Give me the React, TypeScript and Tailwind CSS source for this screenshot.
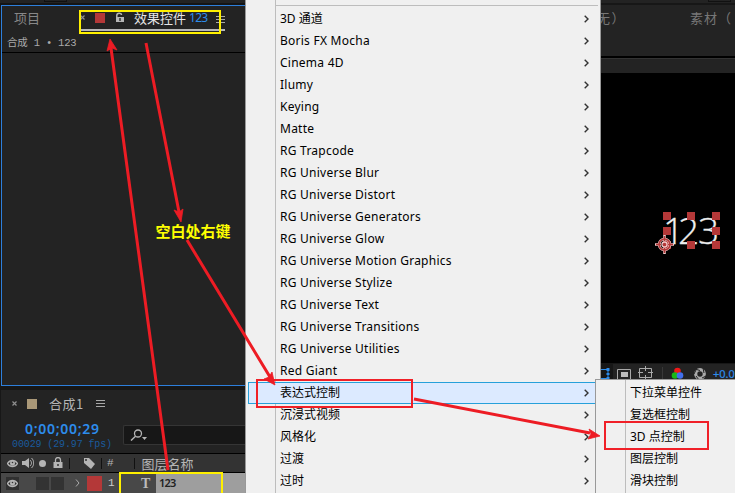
import React from "react";

const menuItems = [
  "3D 通道", "Boris FX Mocha", "Cinema 4D", "Ilumy", "Keying", "Matte", "RG Trapcode",
  "RG Universe Blur", "RG Universe Distort", "RG Universe Generators", "RG Universe Glow",
  "RG Universe Motion Graphics", "RG Universe Stylize", "RG Universe Text",
  "RG Universe Transitions", "RG Universe Utilities", "Red Giant", "表达式控制",
  "沉浸式视频", "风格化", "过渡", "过时",
];
const subItems = ["下拉菜单控件", "复选框控制", "3D 点控制", "图层控制", "滑块控制"];

const sans = "font-['Noto_Sans','Noto_Sans_CJK_SC',sans-serif]";
const mono = "font-['Liberation_Mono','Noto_Sans_CJK_SC',monospace]";
const cjk = "font-['Noto_Sans_CJK_SC',sans-serif]";

function Hamburger() {
  return (
    <svg width="9" height="9" viewBox="0 0 9 9" className="shrink-0" shapeRendering="crispEdges">
      <path d="M0 1.5h9M0 4.5h9M0 7.5h9" stroke="#a8a8a8" />
    </svg>
  );
}

function Close() {
  return (
    <svg width="5" height="5" viewBox="0 0 5 5" className="shrink-0">
      <path d="M.5.5l4 4M4.5.5l-4 4" stroke="#909090" strokeWidth="1.2" />
    </svg>
  );
}

function Eye() {
  return (
    <svg width="11" height="9" viewBox="0 0 11 9" className="shrink-0">
      <path d="M.5 4.5C3 .5 8 .5 10.500 4.500C8 8.500 3 8.500.5 4.500Z" fill="none" stroke="#b5b5b5" strokeWidth="1.4" />
      <circle cx="5.500" cy="4.300" r="2.500" fill="#b5b5b5" />
      <circle cx="5.500" cy="3.500" r=".8" fill="#333" />
    </svg>
  );
}

function EffectPanel() {
  return (
    <section className="ml-px flex h-[381px] flex-col border border-r-0 border-[#2d7fdc] bg-[#232323]">
      <div className="flex h-[26px] w-full items-start">
        <div className={`ml-[12px] w-[66px] text-[13px] leading-[24px] text-[#888] ${cjk}`}>项目</div>
        <div className="flex h-[25px] w-[145px] items-center whitespace-nowrap border-b-2 border-[#b8b8b8]">
          <Close />
          <div className="ml-[10px] size-[10px] shrink-0 bg-[#b43838]" />
          <svg width="10" height="11" viewBox="0 0 10 11" className="ml-[10px] shrink-0">
            <path d="M1.800 5V3.500C1.800.5 6.500.5 6.500 3" fill="none" stroke="#b5b5b5" strokeWidth="1.500" />
            <path d="M1 5h8v5H1z" fill="#b5b5b5" />
            <path d="M5 6v3" stroke="#333" strokeWidth="1.500" />
          </svg>
          <span className={`ml-[9px] text-[13px] leading-none text-[#e5e5e5] ${cjk}`}>效果控件</span>
          <span className="ml-[3px] font-['Noto_Sans',sans-serif] text-[12px] leading-none tracking-[-0.7px] text-[#2d8ceb]">123</span>
          <div className="ml-[8px] mt-[3px]"><Hamburger /></div>
        </div>
      </div>
      <div className={`flex h-[21px] items-center whitespace-pre border-b border-black pl-[5px] pt-[3px] text-[10.5px] tracking-[-0.2px] text-[#aaa] ${mono}`}>合成 1 • 123</div>
    </section>
  );
}

function Timeline() {
  return (
    <section className="ml-px mt-1 flex h-[103px] flex-col bg-[#232323]">
      <div className="flex h-[27px] items-center pl-[11px]">
        <Close />
        <div className="ml-[10px] size-[10px] bg-[#aa9878]" />
        <span className={`ml-[12px] w-[36px] whitespace-nowrap text-[13px] leading-none tracking-[0.5px] text-[#b5b5b5] ${cjk}`}>合成1</span>
        <div className="ml-[11px]"><Hamburger /></div>
      </div>
      <div className="flex h-[36px] items-start">
        <div className="w-[122px] shrink-0 whitespace-pre">
          <div className="ml-[24px] mt-[3px] h-[16px] font-['Noto_Sans',sans-serif] text-[14px] font-semibold leading-[17px] tracking-[0.7px] text-[#2d8ceb]">0;00;00;29</div>
          <div className="ml-[11px] h-[15px] font-['Liberation_Mono',monospace] text-[10px] leading-[18px] tracking-[-0.120px] text-[#1a5a9c]">00029 (29.97 fps)</div>
        </div>
        <div className="mt-[8px] flex h-[20px] flex-1 items-center rounded-l-[2px] border border-r-0 border-[#353535] bg-[#171717] pl-[6px]">
          <svg width="18" height="12" viewBox="0 0 18 12">
            <circle cx="8" cy="4.500" r="3.500" fill="none" stroke="#b5b5b5" strokeWidth="1.300" />
            <path d="M5.500 7.300L1 11.500" stroke="#b5b5b5" strokeWidth="1.500" />
            <path d="M12 8h5l-2.500 3z" fill="#b5b5b5" />
          </svg>
        </div>
      </div>
      <div className="flex h-[20px] shrink-0 items-center whitespace-nowrap border-b border-t border-black bg-[#333] pl-[6px] text-[#b5b5b5]">
        <Eye />
        <svg width="12" height="12" viewBox="0 0 12 12" className="ml-[4px] shrink-0">
          <path d="M0 4h3l4-3v10L3 8H0z" fill="#b5b5b5" />
          <path d="M8 3c2 2 2 4 0 6M9.500 1c3 3 3 7 0 10" stroke="#b5b5b5" fill="none" />
        </svg>
        <div className="ml-[5px] size-[7px] rounded-full bg-[#b5b5b5]" />
        <svg width="10" height="12" viewBox="0 0 10 12" className="ml-[7px] shrink-0">
          <path d="M2.500 5V3a2.500 2.500 0 015 0v2" fill="none" stroke="#b5b5b5" strokeWidth="1.300" />
          <path d="M.5 5h9v6h-9z" fill="#b5b5b5" />
          <path d="M5 7v2" stroke="#333" strokeWidth="1.500" />
        </svg>
        <div className="ml-[6px] h-[11px] w-px bg-[#111]" />
        <svg width="13" height="12" viewBox="0 0 13 12" className="ml-[13px] shrink-0">
          <path d="M1 1h5l6 6-4 5-7-6z" fill="#b5b5b5" /><circle cx="3" cy="3" r="1" fill="#333" />
        </svg>
        <div className="ml-[5px] h-[11px] w-px bg-[#111]" />
        <span className="ml-[5px] pt-px font-['Liberation_Mono',monospace] text-[11px]">#</span>
        <div className="ml-[20px] h-[11px] w-px bg-[#111]" />
        <span className={`ml-[7px] text-[13px] leading-none ${cjk}`}>图层名称</span>
      </div>
      <div className="flex h-[20px] shrink-0 items-center bg-[#484848] pl-[5px]">
        <div className="flex size-[13px] items-center justify-center bg-[#303030]"><Eye /></div>
        <div className="ml-[17px] size-[13px] bg-[#333]" />
        <div className="ml-[2px] size-[13px] bg-[#333]" />
        <svg width="5" height="8" viewBox="0 0 5 8" className="ml-[11px]"><path d="M1 .5L4 4 1 7.500" fill="none" stroke="#aaa" /></svg>
        <div className="ml-[7px] size-[15px] bg-[#b43838]" />
        <span className="ml-[6px] w-[7px] font-['Liberation_Mono',monospace] text-[11px] text-[#ccc]">1</span>
        <span className="ml-[26px] w-[15px] font-['Liberation_Serif',serif] text-[14px] font-bold text-[#bbb]">T</span>
        <div className="h-full flex-1 bg-[#9e9e9e] pl-[3px] font-['Noto_Sans',sans-serif] text-[11px] font-semibold leading-[20px] tracking-[-0.8px] text-[#222]">123</div>
      </div>
    </section>
  );
}

function Menu() {
  return (
    <nav className={`relative flex h-[493px] w-[356px] shrink-0 border-x border-x-[#999] bg-[#f0f0f0] text-[12px] text-black ${sans}`}>
      <div className="w-[30px] shrink-0 border-r border-[#bdbdbd]" />
      <div className="flex-1">
        <div className="mr-[2px] h-[8px] pt-[5px]"><div className="h-px bg-[#bdbdbd]" /></div>
        {menuItems.map((item, i) => (
          <div key={item} className={i === 17 ? "relative -ml-[28px] flex h-[22px] items-center justify-between border border-[#26a0da] bg-[#dceaff] pl-[31px] pr-[10px]" : "flex h-[22px] items-center justify-between pl-[4px] pr-[11px]"}>
            <span className={/[\u4e00-\u9fff]/.test(item) ? "whitespace-pre leading-none" : "whitespace-pre leading-none tracking-[0.25px]"}>{item}</span>
            <svg width="5" height="8" viewBox="0 0 5 8"><path d="M.7.700L4 4 .7 7.300" fill="none" stroke="#333" strokeWidth="1.400" /></svg>
          </div>
        ))}
      </div>
    </nav>
  );
}

function Viewer() {
  return (
    <section className={`flex h-[493px] w-[134px] flex-col overflow-hidden bg-[#232323] text-[#777] ${cjk}`}>
      <div className="flex h-[5px] justify-end border-b-2 border-[#171717]"><div className="mr-[4px] h-[2px] w-[23px] border border-t-0 border-[#111]" /></div>
      <div className="flex h-[53px] whitespace-nowrap border-b-2 border-black text-[13px] leading-[26px]">
        <span className="-ml-[4px] w-[93px] tracking-[1.5px]">无）</span><span className="tracking-[1px]">素材（</span>
      </div>
      <div className="h-[15px] border-t border-[#333]" />
      <div className="h-[290px] bg-black">
        <svg width="134" height="290" viewBox="0 0 134 290">
          <text x="62 77 97" y="171" fill="#eee" stroke="#eee" strokeWidth=".3" className="font-['Open_Sans',sans-serif] text-[37px] font-light">123</text>
          {[[62,139],[86,139],[111,139],[62,154],[111,154],[62,168],[86,168],[111,168]].map(([x,y]) => <path key={`${x}-${y}`} d={`M${x} ${y}h8v8h-8z`} fill="#b43838" />)}
          <g fill="none">
            <g stroke="#f0c8c8" strokeWidth="2.600"><circle cx="63.500" cy="171.500" r="5.500" /><path d="M63.500 162v6M63.500 175v6M54 171.500h6M67 171.500h6" /></g>
            <g stroke="#b43838" strokeWidth="1.500"><circle cx="63.500" cy="171.500" r="5.500" /><path d="M63.500 163v5M63.500 175v5M55 171.500h5M67 171.500h5" /></g>
            <circle cx="63.500" cy="171.500" r="2.500" stroke="#f0c8c8" strokeWidth="1.300" />
          </g>
        </svg>
      </div>
      <div className="flex h-[17px] items-center border-t border-[#171717]">
        <svg width="134" height="17" viewBox="0 0 134 17">
          <path d="M0 0h12v17H0z" fill="#171717" />
          <path d="M0 5.500h7v9H0" fill="none" stroke="#2d8ceb" /><path d="M5.500 4h3v3h-3zM5.500 9h3v2h-3zM5.500 13h3v3h-3z" fill="#2d8ceb" />
          <path d="M16.500 5.500h13v10h-13z" fill="none" stroke="#aaa" /><path d="M20 8h7v5h-7z" fill="#bbb" />
          <path d="M38.500 4.500h12v9h-12zM44.500 2v5M44.500 11v4M37 8.500h5M47 8.500h5" fill="none" stroke="#aaa" />
          <path d="M61.500 3v14" stroke="#383838" />
          <circle cx="76.500" cy="7" r="3.300" fill="#f01818" /><circle cx="74" cy="11.500" r="3.300" fill="#19b819" /><circle cx="79" cy="11.500" r="3.300" fill="#426fed" />
          <circle cx="99" cy="10" r="4.300" fill="none" stroke="#aaa" strokeWidth="3.200" />
          <path d="M94 5l5 1.500M102 4l1 5M105 12l-4 2M98 16l-3-4M93 10l2-4" stroke="#232323" />
          <text x="112" y="14" fill="#2d8ceb" stroke="#2d8ceb" strokeWidth=".2" className="font-['Noto_Sans',sans-serif] text-[11px]">+0.0</text>
        </svg>
      </div>
    </section>
  );
}

function Submenu() {
  return (
    <nav className={`absolute left-[595px] top-[379px] flex h-[114px] w-[140px] border-l border-t border-[#999] bg-[#f0f0f0] text-[12px] text-black ${sans}`}>
      <div className="w-[30px] shrink-0 border-r border-[#bdbdbd]" />
      <div className="pt-[2px]">
        {subItems.map((item) => <div key={item} className="flex h-[22px] items-center whitespace-pre pl-[4px] leading-none">{item}</div>)}
      </div>
    </nav>
  );
}

function Annotations() {
  return (
    <svg className="pointer-events-none absolute left-0 top-0" width="735" height="493" viewBox="0 0 735 493">
      <g fill="none" strokeWidth="2">
        <path d="M80 11h140v22H80zM120 473h102v22H120z" stroke="#fff000" />
        <path d="M257 380h155v27H257zM605 422h103v27H605z" stroke="#f02028" />
      </g>
      <g stroke="#ed1c24" strokeWidth="3">
        <path d="M168 470L111 48M146 43L179 212M187 240L270 377M414 399L590 433" />
      </g>
      <path d="M110 39l7 11-5-2-5 3zM181 222l-7-12 5 2 4-3zM275 385l-11-6 5-2 3-5zM600 436l-12 3 3-5-2-5z" fill="#ed1c24" stroke="#ed1c24" strokeWidth=".8" />
      <text x="155.500" y="237" fill="#ffff00" className="font-['Noto_Sans_CJK_SC',sans-serif] text-[15px] font-bold" textLength="75">空白处右键</text>
    </svg>
  );
}

export default function App() {
  return (
    <main className="relative flex h-[493px] w-[735px] overflow-hidden bg-[#171717]">
      <div className="flex w-[245px] shrink-0 flex-col">
        <div className="h-[5px] shrink-0 border-b-2 border-[#151515] bg-[#232323]"><div className="ml-[44px] h-[2px] w-[23px] border border-t-0 border-[#111]" /></div>
        <EffectPanel />
        <Timeline />
      </div>
      <Menu />
      <Viewer />
      <Submenu />
      <Annotations />
    </main>
  );
}
